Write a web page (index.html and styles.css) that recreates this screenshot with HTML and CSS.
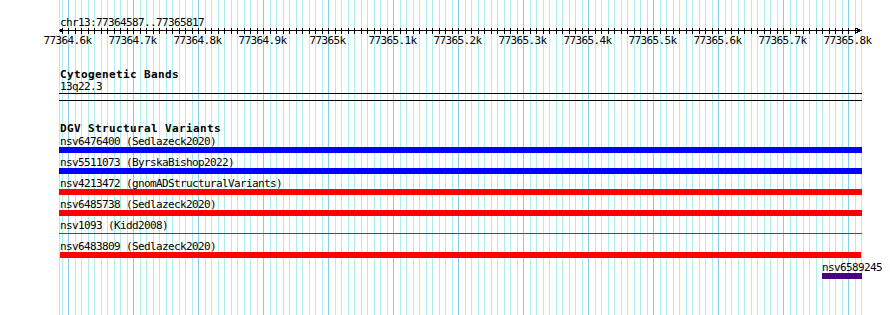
FILE: index.html
```html
<!DOCTYPE html>
<html lang="en">
<head>
    <meta charset="UTF-8">
    <meta name="viewport" content="width=device-width, initial-scale=1.0">
    <title>chr13:77364587..77365817</title>
    <link rel="stylesheet" href="styles.css">
</head>
<body>
    <div class="panel">
        <!-- ruler -->
        <div class="ruler">
            <div class="ref">chr13:77364587..77365817</div>
            <svg class="axis" width="803" height="6" viewBox="0 0 803 6">
                <defs>
                    <pattern id="tick" x="9" width="13" height="6" patternUnits="userSpaceOnUse">
                        <path d="M0.5 0V6M7.5 0V6" stroke="#000"/>
                    </pattern>
                </defs>
                <rect x="2" width="799" height="6" fill="url(#tick)"/>
                <path d="M0 2.5H801" stroke="#000"/>
                <path d="M3.5 0.5L0.5 2.5L3.5 4.5" fill="none" stroke="#000"/>
                <path d="M797.5 0.5L801.5 2.5L797.5 4.5" fill="none" stroke="#000"/>
            </svg>
            <div class="scale">
                <span>77364.6k</span>
                <span>77364.7k</span>
                <span>77364.8k</span>
                <span>77364.9k</span>
                <span>77365k</span>
                <span>77365.1k</span>
                <span>77365.2k</span>
                <span>77365.3k</span>
                <span>77365.4k</span>
                <span>77365.5k</span>
                <span>77365.6k</span>
                <span>77365.7k</span>
                <span>77365.8k</span>
            </div>
        </div>

        <!-- Cytogenetic Bands -->
        <div class="track">
            <div class="track-title">Cytogenetic Bands</div>
            <div class="label">13q22.3</div>
            <div class="band"></div>
        </div>

        <!-- DGV -->
        <div class="track dgv">
            <div class="track-title">DGV Structural Variants</div>

            <div class="feature">
                <div class="label">nsv6476400 (Sedlazeck2020)</div>
                <div class="bar gain"></div>
            </div>
            <div class="feature">
                <div class="label">nsv5511073 (ByrskaBishop2022)</div>
                <div class="bar gain"></div>
            </div>
            <div class="feature">
                <div class="label">nsv4213472 (gnomADStructuralVariants)</div>
                <div class="bar loss"></div>
            </div>
            <div class="feature">
                <div class="label">nsv6485738 (Sedlazeck2020)</div>
                <div class="bar loss"></div>
            </div>
            <div class="feature">
                <div class="label">nsv1093 (Kidd2008)</div>
                <div class="bar loss thin"></div>
            </div>
            <div class="feature">
                <div class="label">nsv6483809 (Sedlazeck2020)</div>
                <div class="bar loss" style="margin-left:1px;width:801px"></div>
            </div>
            <div class="feature inside" style="margin-left:763px">
                <div class="label">nsv6589245 (Sedlazeck2020)</div>
                <div class="bar both" style="width:40px"></div>
            </div>
        </div>
    </div>
</body>
</html>
```

FILE: styles.css
```css
* {
    margin: 0;
    padding: 0;
    box-sizing: border-box;
}

body {
    height: 315px;
    background: #fff;
    overflow: hidden;
    font-family: "DejaVu Sans Mono", "Liberation Mono", monospace;
    font-size: 11px;
    line-height: 13px;
    letter-spacing: -0.62px;
    color: #000;
}

/* grid: 1px left edge, major every 100bp (65px), minor every 10bp */
.panel {
    width: 803px;
    height: 315px;
    margin-left: 59px;
    background:
        linear-gradient(to right, #afeeee 0 1px, transparent 1px) 0 0 / 1px 100% no-repeat,
        linear-gradient(to right, #87ceeb 0 1px, transparent 1px) 9px 0 / 65px 100% repeat-x,
        linear-gradient(to right, #afeeee 0 1px, transparent 1px 7px, #afeeee 7px 8px, transparent 8px) 9px 0 / 13px 100% repeat-x;
}

.ruler {
    padding-top: 16px;
}

.ref {
    height: 12px;
    padding-left: 1px;
}

.axis {
    display: block;
    shape-rendering: crispEdges;
}

.scale {
    display: flex;
    height: 13px;
    margin-left: -24px;
}

.scale span {
    flex: 0 0 65px;
    text-align: center;
    white-space: nowrap;
}

.track {
    margin-top: 21px;
}

.track-title {
    height: 12px;
    padding-left: 1px;
    font-weight: bold;
    letter-spacing: 0.38px;
}

.dgv .track-title {
    height: 13px;
}

.label {
    height: 13px;
    padding-left: 1px;
    white-space: nowrap;
}

.band {
    height: 8px;
    border-top: 1px solid #000;
    border-bottom: 1px solid #000;
}

.feature {
    height: 21px;
}

.feature .label {
    height: 12px;
}

.feature.inside .label {
    padding-left: 0;
}

.bar {
    width: 100%;
    height: 6px;
}

.gain {
    background: #0000ff;
}

.loss {
    background: #ff0000;
}

.loss.thin {
    background: linear-gradient(#ff0000, #ff0000) 0 2px / 100% 1px no-repeat;
}

.both {
    background: #4b0082;
}
```
